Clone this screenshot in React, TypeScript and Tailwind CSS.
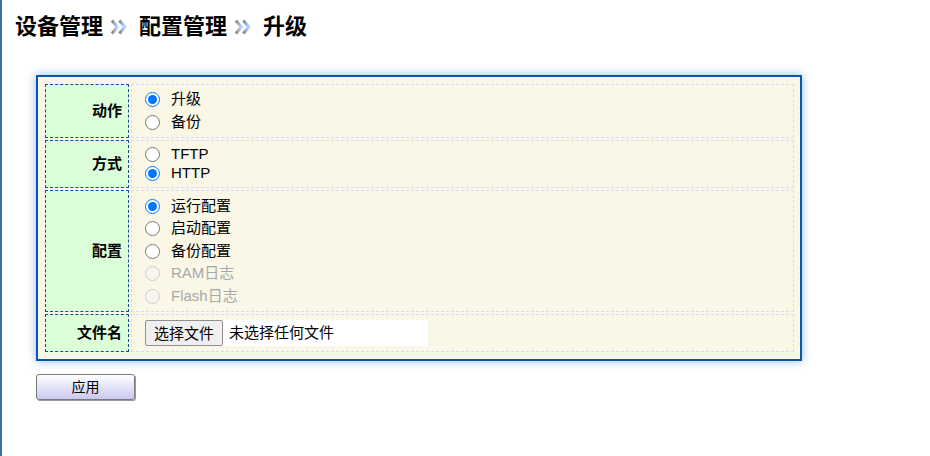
import React from "react";

const font = "font-['Liberation_Sans','Noto_Sans_CJK_SC',sans-serif]";

function Chevrons() {
  return (
    <svg width="18" height="16" viewBox="0 0 18 16" className="ml-[7px] mr-[8px] shrink-0">
      <defs>
        <linearGradient id="cg" x1="0" x2="1" y1="0" y2="0">
          <stop offset="0" stopColor="#7d7d7d" />
          <stop offset="0.45" stopColor="#b0b0b0" />
          <stop offset="0.55" stopColor="#8fbbea" />
          <stop offset="1" stopColor="#c2daf5" />
        </linearGradient>
      </defs>
      <path d="M2 1.5 L7.5 8 L2 14.5" fill="none" stroke="url(#cg)" strokeWidth="3" />
      <path d="M9.5 1.5 L15 8 L9.5 14.5" fill="none" stroke="url(#cg)" strokeWidth="3" />
    </svg>
  );
}

type Opt = { label: string; checked?: boolean; disabled?: boolean };

function RadioList({ name, opts, leading }: { name: string; opts: Opt[]; leading: string }) {
  return (
    <div className="flex flex-col">
      {opts.map((o) => (
        <label key={o.label} className={`flex items-center ${leading} ${o.disabled ? "text-[#a8a8a8]" : "text-black"}`}>
          <input
            type="radio"
            name={name}
            defaultChecked={o.checked}
            disabled={o.disabled}
            className="m-0 ml-[13px] h-[15px] w-[15px]"
          />
          <span className="ml-[11px]">{o.label}</span>
        </label>
      ))}
    </div>
  );
}

function Row({ label, h, children }: { label: string; h: string; children: React.ReactNode }) {
  return (
    <>
      <div className={`${h} flex items-center justify-end border border-dashed border-[#174a9c] bg-[#dbfdd8] pr-[6px] text-[15px] font-bold`}>
        {label}
      </div>
      <div className={`${h} flex flex-col justify-center border border-dashed border-[#d8d8fa] text-[15px]`}>
        {children}
      </div>
    </>
  );
}

export default function App() {
  return (
    <div className={`${font} h-screen border-l-2 border-[#3a6ea5] bg-white text-black`}>
      <h1 className="flex items-center pl-[13px] pt-[14px] text-[22px] leading-[26px] font-bold">
        <span>设备管理</span>
        <Chevrons />
        <span className="ml-[3px]">配置管理</span>
        <Chevrons />
        <span className="ml-[3px]">升级</span>
      </h1>

      <div className="ml-[34px] mt-[35px] w-[766px] border-2 border-[#0757b0] bg-[#faf7e7] p-[7px] pr-[6px] shadow-[0_0_9px_rgba(20,100,200,0.45)]">
        <div className="grid grid-cols-[84px_1fr] gap-[2px]">
          <Row label="动作" h="h-[54px]">
            <RadioList name="act" leading="h-[23px]" opts={[{ label: "升级", checked: true }, { label: "备份" }]} />
          </Row>
          <Row label="方式" h="h-[48px]">
            <RadioList name="mode" leading="h-[19px]" opts={[{ label: "TFTP" }, { label: "HTTP", checked: true }]} />
          </Row>
          <Row label="配置" h="h-[122px]">
            <RadioList
              name="cfg"
              leading="h-[22.5px]"
              opts={[
                { label: "运行配置", checked: true },
                { label: "启动配置" },
                { label: "备份配置" },
                { label: "RAM日志", disabled: true },
                { label: "Flash日志", disabled: true },
              ]}
            />
          </Row>
          <Row label="文件名" h="h-[38px]">
            <div className="ml-[13px] flex h-[26px] w-[283px] items-center bg-white">
              <button className="h-[26px] rounded-[2px] border border-[#8f8f8f] bg-[#efefef] px-[8px] text-[15px] leading-none">
                选择文件
              </button>
              <span className="ml-[6px]">未选择任何文件</span>
            </div>
          </Row>
        </div>
      </div>

      <button className="ml-[34px] mt-[13px] flex h-[26px] w-[99px] items-center justify-center rounded-[3px] border border-[#7a7a7a] bg-gradient-to-b from-white to-[#c9c9f2] text-[14px] shadow-[1px_1px_0_#9a9a9a]">
        应用
      </button>
    </div>
  );
}
